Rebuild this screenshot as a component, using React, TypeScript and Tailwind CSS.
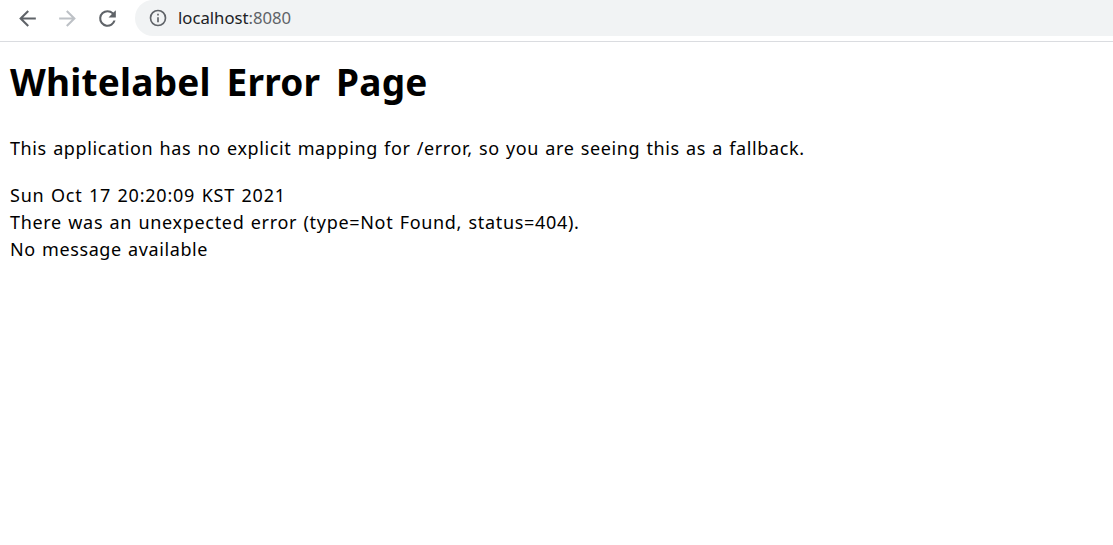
const font = "font-['Noto_Sans','Noto_Sans_CJK_KR',sans-serif]";

function NavIcon({ d, color }: { d: string; color: string }) {
  return (
    <svg width="25" height="25" viewBox="0 0 24 24" fill={color}>
      <path d={d} />
    </svg>
  );
}

export default function App() {
  return (
    <div className={`min-h-[545px] bg-white text-black ${font}`}>
      <div className="flex h-[42px] items-center border-b border-[#dadce0] bg-white pb-[5px] pl-[15px]">
        <div className="flex items-center gap-[15px]">
          <NavIcon color="#5f6368" d="M20 11H7.83l5.59-5.59L12 4l-8 8 8 8 1.41-1.41L7.83 13H20v-2z" />
          <NavIcon color="#bdc1c6" d="M12 4l-1.41 1.41L16.17 11H4v2h12.17l-5.58 5.59L12 20l8-8z" />
          <NavIcon color="#5f6368" d="M17.65 6.35A7.96 7.96 0 0 0 12 4a8 8 0 1 0 7.73 10h-2.08A6 6 0 1 1 12 6c1.66 0 3.14.69 4.22 1.78L13 11h7V4l-2.35 2.35z" />
        </div>
        <div className="ml-[15px] flex h-[36px] flex-1 items-center gap-[10px] rounded-l-[18px] bg-[#f1f3f4] pl-[13px]">
          <svg width="20" height="20" viewBox="0 0 24 24" fill="#5f6368">
            <path d="M11 7h2v2h-2zm0 4h2v6h-2zm1-9a10 10 0 1 0 0 20 10 10 0 0 0 0-20zm0 18a8 8 0 1 1 0-16 8 8 0 0 1 0 16z" />
          </svg>
          <span className="text-[16.7px] text-[#202124]">
            localhost<span className="text-[#5f6368]">:8080</span>
          </span>
        </div>
      </div>
      <div className="px-[10px]">
        <h1 className="mt-[12px] text-[37px] leading-[56px] font-bold tracking-[0.2px] [word-spacing:6px]">Whitelabel Error Page</h1>
        <p className="mt-[25px] text-[18px] leading-[27px] tracking-[0.61px] [word-spacing:1px]">
          This application has no explicit mapping for /error, so you are seeing this as a fallback.
        </p>
        <div className="mt-[20px] text-[18px] leading-[27px] tracking-[0.6px] [word-spacing:1px]">
          <div className="tracking-[0.78px]">Sun Oct 17 20:20:09 KST 2021</div>
          <div className="tracking-[0.68px]">There was an unexpected error (type=Not Found, status=404).</div>
          <div>No message available</div>
        </div>
      </div>
    </div>
  );
}
